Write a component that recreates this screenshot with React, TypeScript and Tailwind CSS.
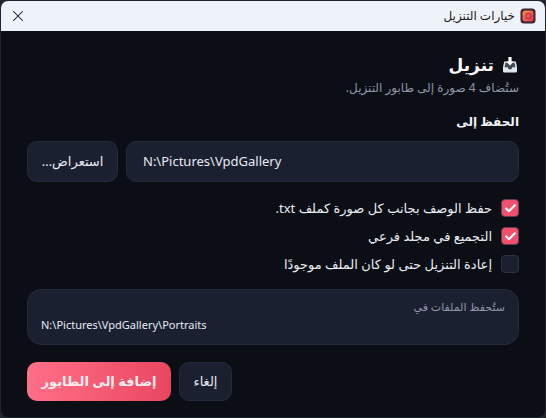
import { Check, X } from "lucide-react";

function AppIcon() {
  return (
    <svg width="16" height="16" viewBox="0 0 16 16" aria-hidden>
      <defs>
        <linearGradient id="appIconFill" x1="0" y1="0" x2="1" y2="1">
          <stop offset="0" stopColor="#f0923c" />
          <stop offset="1" stopColor="#e8305a" />
        </linearGradient>
      </defs>
      <rect x="0.5" y="0.5" width="15" height="15" rx="3.5" fill="#3a2430" />
      <rect x="2.5" y="2.5" width="11" height="11" rx="2.5" fill="url(#appIconFill)" />
      <circle cx="8.5" cy="8" r="2.6" fill="none" stroke="#c22a5c" strokeWidth="1.2" />
    </svg>
  );
}

function InboxIcon() {
  return (
    <svg width="18" height="18" viewBox="0 0 18 18" aria-hidden>
      <path d="M3.2 5.5h11.6l1.2 5.5v4.2a1.3 1.3 0 0 1-1.3 1.3H3.3A1.3 1.3 0 0 1 2 15.2V11Z" fill="#dfe5ec" />
      <path d="M4.5 6.8h9l.9 4.4h-3.2a2.2 2.2 0 0 1-4.4 0H3.6Z" fill="#3f4a57" />
      <path d="M7.4 1h3.2v4.6h2.2L9 9.6 5.2 5.6h2.2Z" fill="#ffffff" />
    </svg>
  );
}

function Option({ label, checked }: { label: string; checked: boolean }) {
  return (
    <label className="flex h-[28px] items-center gap-[9px]">
      <span
        className={
          checked
            ? "flex h-[18px] w-[18px] shrink-0 items-center justify-center rounded-[4px] border border-[#6b3a4a] bg-[#f0506e]"
            : "flex h-[18px] w-[18px] shrink-0 items-center justify-center rounded-[4px] border border-[#2a3142] bg-[#1b2030]"
        }
      >
        {checked && <Check size={13} strokeWidth={4} className="text-white" />}
      </span>
      <span className="text-[13px] leading-none text-[#e8ecf2]">{label}</span>
    </label>
  );
}

export default function App() {
  return (
    <div
      dir="rtl"
      className="flex h-[418px] w-[546px] flex-col overflow-hidden bg-[#20242b] p-px font-['Noto_Sans','DejaVu_Sans',sans-serif]"
    >
      <div className="flex h-[30px] shrink-0 items-center justify-between rounded-t-[7px] bg-[#eef3f9] pl-[8px] pr-[9px]">
        <div className="flex items-center gap-[5px]">
          <AppIcon />
          <span className="text-[12px] text-[#1a1a1a]">خيارات التنزيل</span>
        </div>
        <X size={18} strokeWidth={1.4} className="text-[#1a1a1a]" />
      </div>

      <div className="flex min-h-0 flex-1 flex-col rounded-b-[7px] bg-[#0b0e15] px-[26px] pt-[22px]">
        <div className="flex items-center gap-[7px]">
          <InboxIcon />
          <h1 className="text-[17px] leading-[24px] font-bold text-white">تنزيل</h1>
        </div>
        <p className="mt-[3px] text-[12px] leading-[16px] text-[#8d97a8]">ستُضاف 4 صورة إلى طابور التنزيل.</p>

        <p className="mt-[18px] text-[12px] leading-[16px] font-bold text-[#eef1f5]">الحفظ إلى</p>

        <div className="mt-[11px] flex gap-[8px]">
          <div
            dir="ltr"
            className="flex h-[41px] flex-1 items-center rounded-[10px] border border-[#252b3a] bg-[#1a2030] px-[16px] text-[13px] text-[#e6ebf2]"
          >
            N:\Pictures\VpdGallery
          </div>
          <button
            type="button"
            className="h-[41px] w-[91px] rounded-[10px] border border-[#252b3a] bg-[#1a2030] text-[13px] text-[#e6ebf2]"
          >
            استعراض...
          </button>
        </div>

        <div className="mt-[12px] flex flex-col">
          <Option label="حفظ الوصف بجانب كل صورة كملف txt." checked />
          <Option label="التجميع في مجلد فرعي" checked />
          <Option label="إعادة التنزيل حتى لو كان الملف موجودًا" checked={false} />
        </div>

        <div className="mt-[11px] flex h-[56px] flex-col rounded-[14px] border border-[#252b3a] bg-[#1a2030] px-[13px] pt-[10px]">
          <p className="text-[11px] leading-[14px] text-[#8d97a8]">ستُحفظ الملفات في</p>
          <p dir="ltr" className="mt-[4px] text-right text-[11px] leading-[14px] text-[#e6ebf2]">
            <span className="block text-left">N:\Pictures\VpdGallery\Portraits</span>
          </p>
        </div>

        <div className="mt-[17px] flex justify-end gap-[8px]">
          <button
            type="button"
            className="h-[39px] w-[53px] rounded-[10px] border border-[#252b3a] bg-[#1a2030] text-[13px] text-[#e6ebf2]"
          >
            إلغاء
          </button>
          <button
            type="button"
            className="h-[39px] w-[144px] rounded-[10px] bg-gradient-to-l from-[#ea4560] to-[#ff6f87] text-[13px] font-bold text-[#fdeef1]"
          >
            إضافة إلى الطابور
          </button>
        </div>
      </div>
    </div>
  );
}
